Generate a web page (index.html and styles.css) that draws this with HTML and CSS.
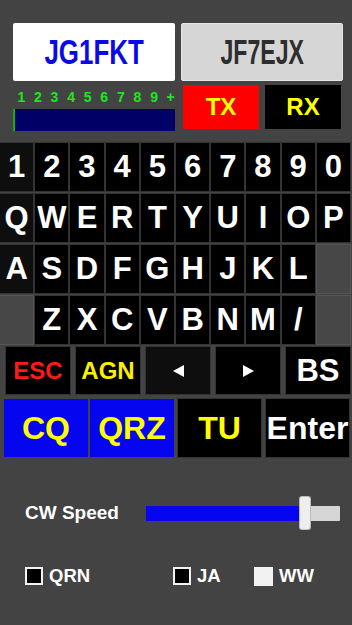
FILE: index.html
```html
<!DOCTYPE html>
<html>
<head>
<meta charset="utf-8">
<link rel="stylesheet" href="styles.css">
</head>
<body>
<div class="top">
  <div class="col">
    <div class="call call-mine"><span class="call-text">JG1FKT</span></div>
    <div class="levels">
      <span>1</span><span>2</span><span>3</span><span>4</span><span>5</span><span>6</span><span>7</span><span>8</span><span>9</span><span>+</span>
    </div>
    <div class="meter"></div>
  </div>
  <div class="col">
    <div class="call call-his"><span class="call-text narrow">JF7EJX</span></div>
    <div class="txrx">
      <div class="tx">TX</div>
      <div class="rx">RX</div>
    </div>
  </div>
</div>

<div class="keys">
  <div class="key dim">1</div><div class="key">2</div><div class="key">3</div><div class="key">4</div><div class="key">5</div><div class="key">6</div><div class="key">7</div><div class="key">8</div><div class="key">9</div><div class="key">0</div>
  <div class="key dim">Q</div><div class="key">W</div><div class="key">E</div><div class="key">R</div><div class="key">T</div><div class="key">Y</div><div class="key">U</div><div class="key">I</div><div class="key">O</div><div class="key">P</div>
  <div class="key dim">A</div><div class="key">S</div><div class="key">D</div><div class="key">F</div><div class="key">G</div><div class="key">H</div><div class="key">J</div><div class="key">K</div><div class="key">L</div><div class="key empty"></div>
  <div class="key empty"></div><div class="key">Z</div><div class="key">X</div><div class="key">C</div><div class="key">V</div><div class="key">B</div><div class="key">N</div><div class="key">M</div><div class="key">/</div><div class="key empty"></div>
</div>

<div class="fn-row">
  <div class="fkey esc">ESC</div>
  <div class="fkey agn">AGN</div>
  <div class="fkey dim"><svg width="11" height="12" viewBox="0 0 11 12"><polygon points="11,0 11,12 0,6" fill="#fff"/></svg></div>
  <div class="fkey"><svg width="11" height="12" viewBox="0 0 11 12"><polygon points="0,0 0,12 11,6" fill="#fff"/></svg></div>
  <div class="fkey bs">BS</div>
</div>

<div class="big-row">
  <div class="bkey blue cq">CQ</div>
  <div class="bkey blue qrz">QRZ</div>
  <div class="bkey tu">TU</div>
  <div class="bkey enter">Enter</div>
</div>

<div class="speed">
  <div class="speed-label">CW Speed</div>
  <div class="slider">
    <div class="slider-fill"></div>
    <div class="slider-thumb"></div>
  </div>
</div>

<div class="opts">
  <div class="opt opt-qrn"><span class="box"></span><span class="opt-label">QRN</span></div>
  <div class="opt opt-ja"><span class="box"></span><span class="opt-label">JA</span></div>
  <div class="opt"><span class="box checked"></span><span class="opt-label">WW</span></div>
</div>
</body>
</html>
```
FILE: styles.css
```css
* { box-sizing: border-box; }
html, body { margin: 0; padding: 0; }
body {
  width: 352px;
  height: 625px;
  background: #434343;
  font-family: "Liberation Sans", Arial, sans-serif;
  font-weight: bold;
  color: #fff;
  overflow: hidden;
}
.top {
  display: flex;
  gap: 6px;
  padding: 23px 0 0 13px;
}
.col { width: 162px; }
.call {
  height: 58px;
  border-radius: 2px;
  display: flex;
  align-items: center;
  justify-content: center;
  overflow: hidden;
}
.call-mine { background: #fff; color: #0a0ae6; }
.call-his { background: #d6d6d6; color: #2e2e2e; border: 1px solid #e6e6e6; }
.call-text {
  display: inline-block;
  font-size: 35px;
  transform: scaleX(0.74);
}
.call-text.narrow { transform: scaleX(0.66); }
.levels {
  display: grid;
  grid-template-columns: repeat(10, 16.6px);
  margin-top: 9px;
  height: 15px;
  font-size: 14px;
  line-height: 15px;
  color: #1ee61e;
  text-align: center;
}
.meter {
  margin-top: 4px;
  height: 22px;
  background: #000066;
  border-left: 2px solid #10b010;
}
.txrx {
  display: flex;
  gap: 6px;
  margin-top: 4px;
  padding-left: 2px;
}
.tx, .rx {
  width: 76px;
  height: 44px;
  display: flex;
  align-items: center;
  justify-content: center;
  font-size: 24px;
  color: #ffff00;
}
.tx { background: #ff0000; }
.rx { background: #000; }

.keys {
  display: grid;
  grid-template-columns: repeat(10, 1fr);
  grid-auto-rows: 48px;
  column-gap: 2px;
  row-gap: 3px;
  margin-top: 12px;
  padding-right: 2px;
}
.key {
  background: #000;
  display: flex;
  align-items: center;
  justify-content: center;
  font-size: 31px;
  box-shadow: 0 0 0 1px #333;
}
.key.dim, .fkey.dim { background: #0e0e0e; }
.key.empty { background: #474747; box-shadow: 0 0 0 1px #555; }

.fn-row {
  display: flex;
  gap: 6px;
  margin-top: 3px;
  padding-left: 6px;
}
.fkey {
  width: 64px;
  height: 47px;
  background: #000;
  display: flex;
  align-items: center;
  justify-content: center;
  font-size: 24px;
  box-shadow: 0 0 0 1px #333;
}
.esc { color: #ff1a1a; }
.agn { color: #ffee00; }
.bs { font-size: 31px; color: #fff; }

.big-row {
  display: flex;
  margin-top: 5px;
  padding-left: 4px;
}
.bkey {
  height: 58px;
  width: 83px;
  background: #000;
  display: flex;
  align-items: center;
  justify-content: center;
  font-size: 32px;
  color: #ffff00;
  box-shadow: 0 0 0 1px #333;
}
.blue { background: #0505f0; box-shadow: none; }
.cq { width: 84px; }
.qrz { width: 84px; margin-left: 2px; }
.tu { margin-left: 4px; }
.enter { margin-left: 5px; color: #fff; }

.speed {
  display: flex;
  align-items: center;
  height: 32px;
  margin-top: 40px;
}
.speed-label {
  width: 146px;
  padding-left: 25px;
  font-size: 19px;
}
.slider {
  position: relative;
  width: 194px;
  height: 15px;
  background: #d6d6d6;
  border-radius: 1px;
}
.slider-fill {
  width: 156px;
  height: 15px;
  background: #0505f0;
}
.slider-thumb {
  position: absolute;
  left: 154px;
  top: -9px;
  width: 10px;
  height: 32px;
  background: #eeeeee;
  border-radius: 2px;
  box-shadow: 0 0 0 1px #bbb;
}

.opts {
  display: flex;
  align-items: center;
  margin-top: 38px;
  padding-left: 25px;
  height: 18px;
}
.opt { display: flex; align-items: center; }
.opt-qrn { width: 148px; }
.opt-ja { width: 81px; }
.box {
  width: 18px;
  height: 18px;
  border: 2px solid #f2f2f2;
  background: #000;
}
.box.checked { width: 19px; height: 19px; background: #f2f2f2; }
.opt-label {
  margin-left: 6px;
  font-size: 18.5px;
}
```
